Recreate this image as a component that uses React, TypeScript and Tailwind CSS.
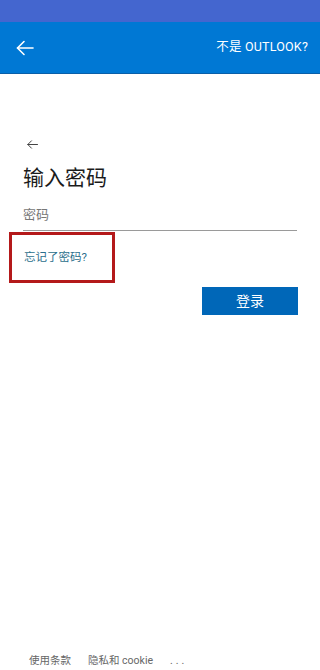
export default function App() {
  return (
    <div
      className="flex h-[670px] w-[320px] flex-col overflow-hidden bg-white"
      style={{ fontFamily: '"Roboto", "Noto Sans CJK SC", sans-serif' }}
    >
      {/* status bar */}
      <div className="h-[22px] bg-[#4466cf]" />

      {/* header */}
      <header className="flex h-[52px] items-center justify-between border-b border-[#0a5fa8] bg-[#0078d4] pl-4 pr-3 text-white">
        <svg width="18" height="16" viewBox="0 0 18 16" fill="none" stroke="white" strokeWidth="1.6" strokeLinecap="round" strokeLinejoin="round">
          <path d="M17 8H1.5" />
          <path d="M8 1.5L1.5 8L8 14.5" />
        </svg>
        <span className="text-[12.5px] tracking-[0.2px]">不是 OUTLOOK?</span>
      </header>

      {/* content */}
      <main className="flex flex-1 flex-col px-[23px] pt-[66px]">
        <svg className="ml-[4px]" width="11" height="9" viewBox="0 0 11 9" fill="none" stroke="#444" strokeWidth="1" strokeLinecap="round" strokeLinejoin="round">
          <path d="M10.5 4.5H0.8" />
          <path d="M4.5 0.8L0.8 4.5L4.5 8.2" />
        </svg>
        <h1 className="mt-[14px] text-[21px] leading-[30px] text-[#1b1b1b]">输入密码</h1>
        <div className="mt-[13px] w-[274px] border-b border-[#9a9a9a] pb-[6px] text-[13px] leading-[18px] text-[#777]">
          密码
        </div>
        <div className="-ml-[14px] mt-px flex h-[51px] w-[106px] items-center border-[3px] border-[#b4191a] pl-[12px]">
          <span className="text-[11.5px] text-[#2b6f8c]">忘记了密码?</span>
        </div>
        <div className="mt-[4px] flex w-[275px] justify-end">
          <button className="flex h-[28px] w-[96px] items-center justify-center bg-[#0067b8] text-[14px] text-white">
            登录
          </button>
        </div>
      </main>

      {/* footer */}
      <footer className="flex items-center pb-[2px] pl-[29px] text-[10.5px] leading-[14px] text-[#666]">
        <span>使用条款</span>
        <span className="ml-[17px]">隐私和 cookie</span>
        <span className="ml-[17px] tracking-[3px]">...</span>
      </footer>
    </div>
  );
}
